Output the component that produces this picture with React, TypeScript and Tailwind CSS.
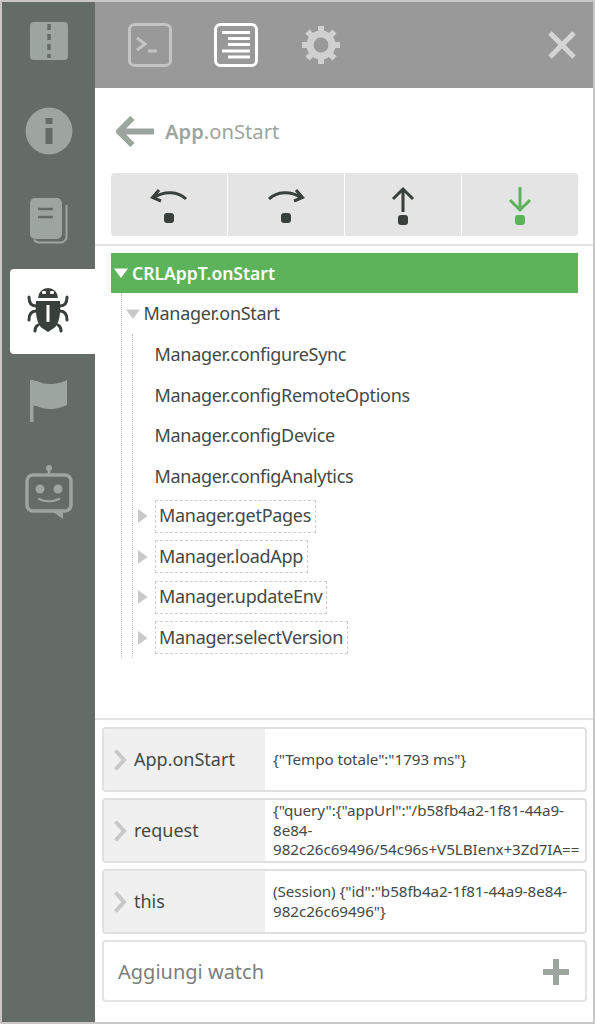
import React from "react";

const Tri = ({ dir, cls }: { dir: "down" | "right"; cls: string }) => (
  <svg width="14" height="14" viewBox="0 0 14 14" className={cls}>
    {dir === "down" ? <path d="M0 2.500h14L7 12z" fill="currentColor" /> : <path d="M2 0l9.500 7L2 14z" fill="currentColor" />}
  </svg>
);

const Chevron = () => (
  <svg width="14" height="24" viewBox="0 0 14 24" className="text-[#c8c8c8]">
    <path d="M2.500 2.500L11 12l-8.500 9.500" fill="none" stroke="currentColor" strokeWidth="4" />
  </svg>
);

const tabs = [
  <svg key="a" width="38" height="38" viewBox="0 0 38 38"><rect width="38" height="38" rx="4" fill="#9ca59e" /><path d="M19 2v34" stroke="#656b66" strokeWidth="3.500" strokeDasharray="6 4" /></svg>,
  <svg key="b" width="48" height="48" viewBox="0 0 48 48"><circle cx="24" cy="24" r="23.500" fill="#9ca59e" /><rect x="20.500" y="11" width="7" height="6" fill="#656b66" /><rect x="20.500" y="21" width="7" height="16" fill="#656b66" /></svg>,
  <svg key="c" width="38" height="46" viewBox="0 0 38 46"><rect x="0" y="0" width="32" height="41" rx="5" fill="#9ca59e" /><path d="M8 11h15M8 19h15" stroke="#656b66" strokeWidth="2.500" /><path d="M36.500 7v31a6 6 0 0 1-6 6.500H9a6 6 0 0 1-5-3" fill="none" stroke="#9ca59e" strokeWidth="2" /></svg>,
  <svg key="d" width="42" height="46" viewBox="0 0 42 46"><path d="M11 11a10 10 0 0 1 20 0z" fill="#39403b" /><rect x="15" y="4" width="4" height="3" rx="1" fill="#fff" /><rect x="23" y="4" width="4" height="3" rx="1" fill="#fff" /><path d="M9 14h24c1 12-1 24-6 27l-6 4-6-4c-5-3-7-15-6-27z" fill="#39403b" /><rect x="19.500" y="18" width="3" height="17" fill="#fff" /><path d="M2 10c0 5 2 9 7 9M40 10c0 5-2 9-7 9M2 33c0-6 2-9 7-9M40 33c0-6-2-9-7-9M8 44c0-4 1-5 3-6M34 44c0-4-1-5-3-6" fill="none" stroke="#39403b" strokeWidth="3" strokeLinecap="round" /></svg>,
  <svg key="e" width="37" height="42" viewBox="0 0 37 42"><rect x="0" y="0" width="3.500" height="43" rx="1" fill="#9ca59e" /><path d="M0 0c8 0 11 4 19 4 8 0 14-2 18-4v25c-5 2-10 4-18 4-8 0-11-4-19-4z" fill="#9ca59e" /></svg>,
  <svg key="f" width="48" height="56" viewBox="0 0 48 56"><circle cx="24" cy="4" r="3" fill="#9ca59e" /><path d="M24 6v6" stroke="#9ca59e" strokeWidth="2.500" /><rect x="2" y="11" width="44" height="36" rx="6" fill="none" stroke="#9ca59e" strokeWidth="3.500" /><circle cx="15" cy="25" r="4.500" fill="#9ca59e" /><circle cx="33" cy="25" r="4.500" fill="#9ca59e" /><path d="M14 35c6 3 14 3 20 0" fill="none" stroke="#9ca59e" strokeWidth="2.500" strokeLinecap="round" /><path d="M28 48l10 7v-7z" fill="#9ca59e" /></svg>,
];

const Steps = [
  <svg key="1" width="38" height="36" viewBox="0 0 38 36"><path d="M36 11C28 3 14 3 5 9" fill="none" stroke="#39403b" strokeWidth="3" /><path d="M9 2L2.500 9.500 11 13" fill="none" stroke="#39403b" strokeWidth="3" /><rect x="14" y="25" width="10" height="10" rx="3" fill="#39403b" /></svg>,
  <svg key="2" width="38" height="36" viewBox="0 0 38 36"><path d="M2 11C10 3 24 3 33 9" fill="none" stroke="#39403b" strokeWidth="3" /><path d="M29 2l6.500 7.500L27 13" fill="none" stroke="#39403b" strokeWidth="3" /><rect x="14" y="25" width="10" height="10" rx="3" fill="#39403b" /></svg>,
  <svg key="3" width="24" height="40" viewBox="0 0 24 40"><path d="M12 3v23M2 13L12 3l10 10" fill="none" stroke="#39403b" strokeWidth="3" /><rect x="7" y="29" width="10" height="10" rx="3" fill="#39403b" /></svg>,
  <svg key="4" width="24" height="40" viewBox="0 0 24 40"><path d="M12 1v23M2 14l10 10 10-10" fill="none" stroke="#5cb35a" strokeWidth="3" /><rect x="7" y="29" width="10" height="10" rx="3" fill="#5cb35a" /></svg>,
];

const Boxed = ({ text }: { text: string }) => (
  <div className="flex h-[40.500px] items-center">
    <Tri dir="right" cls="ml-[3px] mr-[5px] text-[#c9c9c9]" />
    <div className="border border-dashed border-[#cfcfcf] pl-[3px] pr-[4px] h-[33px] flex items-center pb-[1px]">{text}</div>
  </div>
);

const Watch = ({ label, children }: { label: string; children: React.ReactNode }) => (
  <div className="flex h-[65px] border-2 border-[#e0e0e0] rounded-[4px] overflow-hidden">
    <div className="w-[161px] shrink-0 bg-[#f0f0f0] flex items-center pl-[9px] gap-[7px] text-[18px] text-[#444a46]">
      <Chevron />
      <span>{label}</span>
    </div>
    <div className="flex-1 min-w-0 flex items-center pl-[8px] text-[15.200px] tracking-[-0.05px] leading-[19.500px] text-[#444a46] whitespace-pre-line">{children}</div>
  </div>
);

export default function App() {
  return (
    <div className="w-[595px] h-[1024px] flex bg-white border-2 border-[#c8c8c8] overflow-hidden text-[#444a46]" style={{ fontFamily: '"Noto Sans", sans-serif' }}>
      <aside className="w-[93px] shrink-0 bg-[#656b66] flex flex-col">
        <div className="h-[78px] flex items-center justify-center">{tabs[0]}</div>
        <div className="h-[85px] mt-[8px] flex items-center justify-center">{tabs[1]}</div>
        <div className="h-[85px] mt-[5px] flex items-center justify-center">{tabs[2]}</div>
        <div className="h-[85px] mt-[6px] ml-[8px] bg-white rounded-l-[4px] flex items-center justify-center pr-[9px] pb-[3px]">{tabs[3]}</div>
        <div className="h-[85px] mt-[5px] flex items-center justify-center pr-[1px] pb-[1px]">{tabs[4]}</div>
        <div className="h-[85px] mt-[5px] flex items-center justify-center">{tabs[5]}</div>
      </aside>
      <main className="flex-1 min-w-0 flex flex-col">
        <header className="h-[86px] shrink-0 bg-[#999999] flex items-center pl-[33px] pr-[17px]">
          <svg width="44" height="44" viewBox="0 0 44 44" className="mr-[42px]"><rect x="1.500" y="1.500" width="41" height="41" rx="5" fill="none" stroke="#c4c4c4" strokeWidth="3" /><path d="M9 15l8 6-8 6" fill="none" stroke="#c4c4c4" strokeWidth="3" /><path d="M20 28h9" stroke="#c4c4c4" strokeWidth="3" /></svg>
          <svg width="44" height="44" viewBox="0 0 44 44" className="mr-[44px]"><rect x="1.500" y="1.500" width="41" height="41" rx="5" fill="none" stroke="#fff" strokeWidth="3" /><path d="M8 9.500h28M14 15.500h22M14 21.500h22M8 28h28M14 34h22" stroke="#fff" strokeWidth="2.800" /></svg>
          <svg width="38" height="38" viewBox="0 0 38 38" className="mr-auto"><circle cx="19" cy="19" r="11" fill="none" stroke="#d0d0d0" strokeWidth="7" /><path d="M19 0v6M19 32v6M0 19h6M32 19h6M5.500 5.500l4.500 4.500M28 28l4.500 4.500M5.500 32.500L10 28M28 10l4.500-4.500" stroke="#d0d0d0" strokeWidth="6" /></svg>
          <svg width="28" height="28" viewBox="0 0 28 28"><path d="M2 2l24 24M26 2L2 26" stroke="#d5d5d5" strokeWidth="5" /></svg>
        </header>

        <div className="h-[85px] shrink-0 flex items-center pl-[21px] pt-[1px]">
          <svg width="38" height="31" viewBox="0 0 38 31" className="mr-[11px]"><path d="M38 15.500H5M16.500 2L3 15.500 16.500 29" fill="none" stroke="#9ca59e" strokeWidth="6" /></svg>
          <span className="text-[20.200px] text-[#9ca59e]"><b className="font-semibold">App</b>.onStart</span>
        </div>

        <div className="shrink-0 ml-[16px] mr-[15px] h-[63px] flex gap-px rounded-[4px] overflow-hidden">
          {Steps.map((s, i) => (
            <div key={i} className="flex-1 bg-[#e4e4e4] flex items-center justify-center pt-[3px]">{s}</div>
          ))}
        </div>

        <div className="mt-[8px] border-t-2 border-[#e4e4e4] flex-1 min-h-0 pt-[7px]">
          <div className="ml-[16px] mr-[15px] h-[40px] bg-[#5cb35a] flex items-center pl-[3px] text-white font-semibold text-[17.500px]">
            <Tri dir="down" cls="mr-[4px] text-white" />
            <span>CRLAppT.onStart</span>
          </div>
          <div className="ml-[26px] mr-[15px] w-fit border-l border-dotted border-[#bdbdbd] h-[365px] text-[18px] tracking-[-0.3px]">
            <div className="flex items-center h-[41px] pl-[4px]">
              <Tri dir="down" cls="mr-[3.500px] text-[#c9c9c9]" />
              <span>Manager.onStart</span>
            </div>
            <div className="ml-[10px] border-l border-dotted border-[#bdbdbd] h-[324px] pl-[21.500px] -mr-[100px]">
              <div className="h-[40.500px] flex items-center pt-[1px]">Manager.configureSync</div>
              <div className="h-[40.500px] flex items-center pt-[1px]">Manager.configRemoteOptions</div>
              <div className="h-[40.500px] flex items-center pt-[1px]">Manager.configDevice</div>
              <div className="h-[40.500px] flex items-center pt-[1px]">Manager.configAnalytics</div>
              <div className="-ml-[21.500px]">
                <Boxed text="Manager.getPages" />
                <Boxed text="Manager.loadApp" />
                <Boxed text="Manager.updateEnv" />
                <Boxed text="Manager.selectVersion" />
              </div>
            </div>
          </div>
        </div>

        <div className="h-[304px] shrink-0 border-t-2 border-[#e4e4e4] pl-[7px] pr-[6px] pt-[7px] flex flex-col gap-[6px]">
          <Watch label="App.onStart">{'{"Tempo totale":"1793 ms"}'}</Watch>
          <Watch label="request">{'{"query":{"appUrl":"/b58fb4a2-1f81-44a9-\n8e84-\n982c26c69496/54c96s+V5LBIenx+3Zd7IA=='}</Watch>
          <Watch label="this">{'(Session) {"id":"b58fb4a2-1f81-44a9-8e84-\n982c26c69496"}'}</Watch>
          <div className="h-[62px] border-2 border-[#e4e4e4] rounded-[4px] flex items-center justify-between pl-[14px] pr-[16px] pt-[2px] text-[20px] text-[#7b7f7c]">
            <span>Aggiungi watch</span>
            <svg width="26" height="26" viewBox="0 0 26 26"><path d="M13 0v26M0 13h26" stroke="#9ca59e" strokeWidth="6" /></svg>
          </div>
        </div>
      </main>
    </div>
  );
}
